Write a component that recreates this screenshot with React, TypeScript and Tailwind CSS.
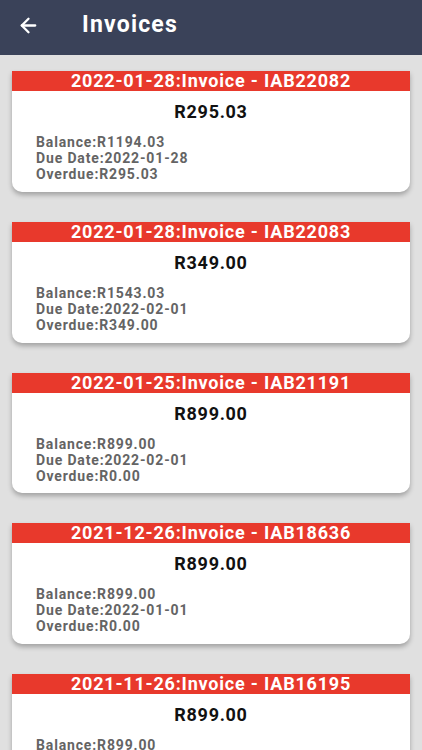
import { ArrowLeft } from "lucide-react";

interface Invoice {
  date: string;
  ref: string;
  amount: string;
  balance: string;
  dueDate: string;
  overdue: string;
}

const invoices: Invoice[] = [
  { date: "2022-01-28", ref: "IAB22082", amount: "R295.03", balance: "R1194.03", dueDate: "2022-01-28", overdue: "R295.03" },
  { date: "2022-01-28", ref: "IAB22083", amount: "R349.00", balance: "R1543.03", dueDate: "2022-02-01", overdue: "R349.00" },
  { date: "2022-01-25", ref: "IAB21191", amount: "R899.00", balance: "R899.00", dueDate: "2022-02-01", overdue: "R0.00" },
  { date: "2021-12-26", ref: "IAB18636", amount: "R899.00", balance: "R899.00", dueDate: "2022-01-01", overdue: "R0.00" },
  { date: "2021-11-26", ref: "IAB16195", amount: "R899.00", balance: "R899.00", dueDate: "2021-12-01", overdue: "R0.00" },
];

function InvoiceCard({ invoice }: { invoice: Invoice }) {
  return (
    <div className="bg-white rounded-b-[10px] shadow-[0_3px_5px_rgba(0,0,0,0.28)] h-[120.75px] shrink-0 overflow-hidden">
      <div className="bg-[#e8392c] h-[20px] text-white font-bold text-[18px] leading-[20px] tracking-[0.8px] text-center">
        {invoice.date}:Invoice - {invoice.ref}
      </div>
      <div className="mt-[9px] text-center font-bold text-[18px] leading-[24px] tracking-[0.7px] text-[#111]">
        {invoice.amount}
      </div>
      <div className="mt-[10px] pl-[24px] font-bold text-[14px] leading-[16px] tracking-[0.85px] text-[#646464]">
        <div>Balance:{invoice.balance}</div>
        <div>Due Date:{invoice.dueDate}</div>
        <div>Overdue:{invoice.overdue}</div>
      </div>
    </div>
  );
}

export default function App() {
  return (
    <div className="h-screen overflow-hidden bg-[#e0e0e0] font-['Roboto',sans-serif] flex flex-col">
      <div className="h-[55px] shrink-0 bg-[#3a4259] flex items-center pb-[5px] text-white">
        <ArrowLeft className="ml-[17px] w-[23px] h-[23px]" strokeWidth={2.4} />
        <h1 className="ml-[42px] text-[23px] font-bold tracking-[1.2px]">Invoices</h1>
      </div>
      <div className="px-[12px] pt-[16px] flex flex-col gap-[30px] pb-[30px]">
        {invoices.map((inv) => (
          <InvoiceCard key={inv.ref} invoice={inv} />
        ))}
      </div>
    </div>
  );
}
